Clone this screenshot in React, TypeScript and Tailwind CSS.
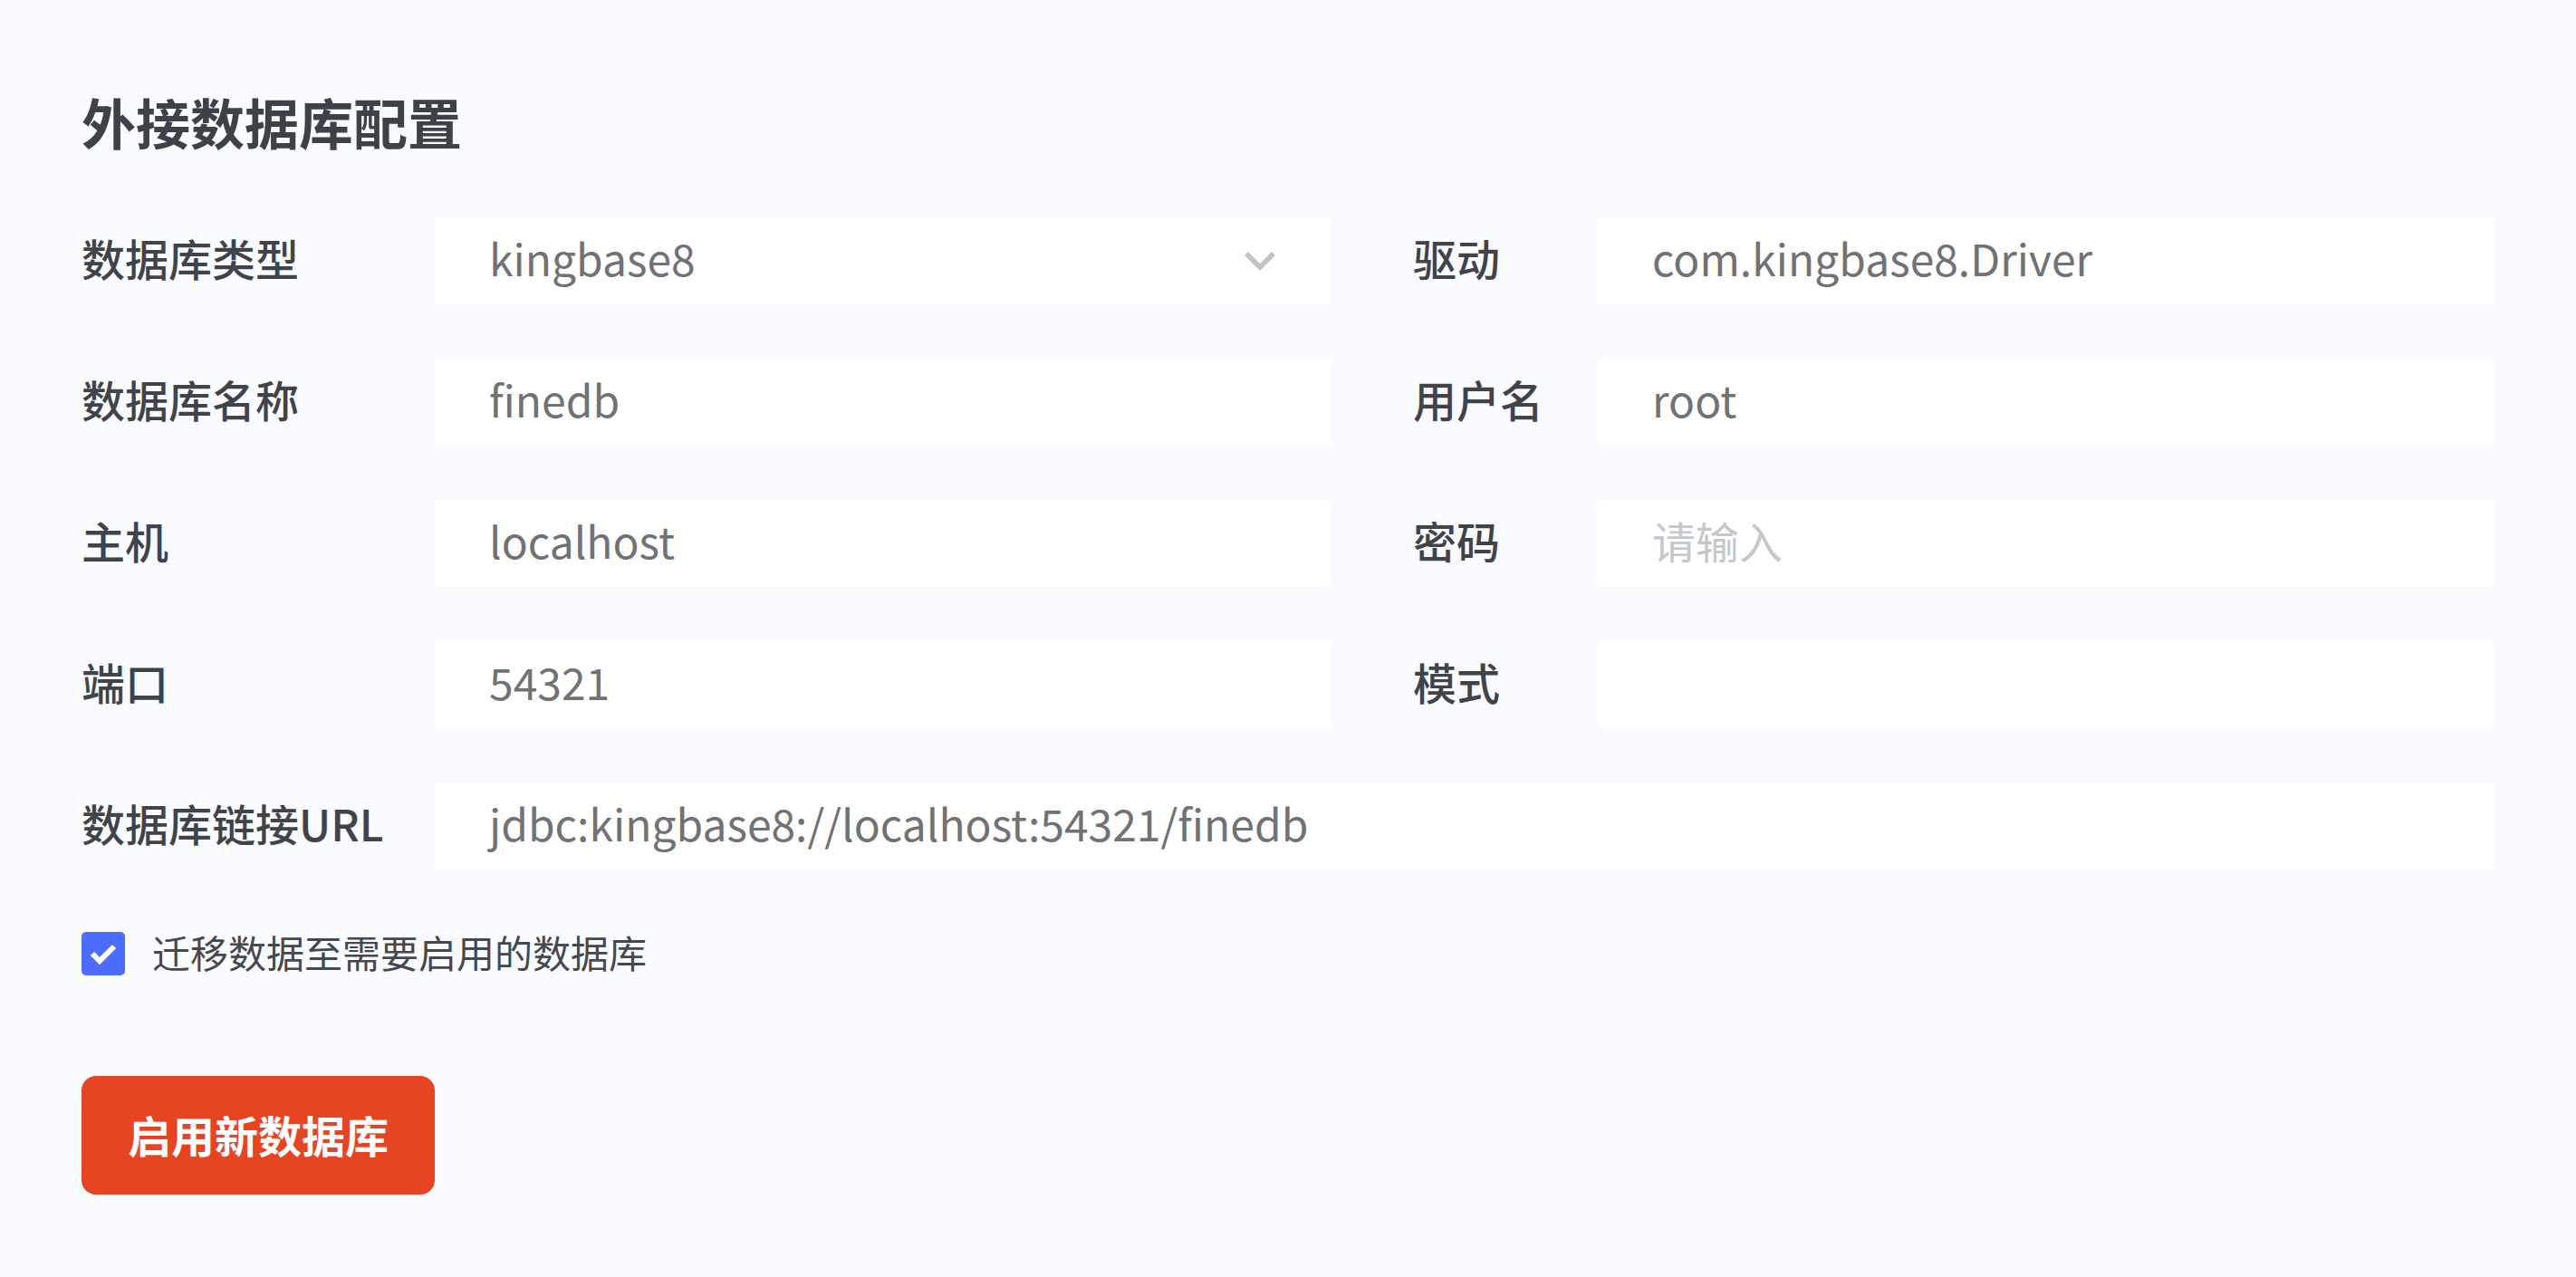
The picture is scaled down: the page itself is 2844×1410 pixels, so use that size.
import React from "react";

const font = { fontFamily: '"Noto Sans CJK SC", "Noto Sans", sans-serif' };

function Chevron() {
  return (
    <svg width="36" height="22" viewBox="0 0 36 22" fill="none">
      <path d="M3 3 L18 18 L33 3" stroke="#c2c3c7" strokeWidth="5.5" />
    </svg>
  );
}

function Field({ value, placeholder, select }: { value?: string; placeholder?: string; select?: boolean }) {
  return (
    <div className="flex h-[96px] flex-1 items-center bg-white pl-[60px] pr-[61px]">
      {value ? (
        <span className="flex-1 pb-[8px] text-[48px] leading-none text-[#707276]">{value}</span>
      ) : (
        <span className="flex-1 pb-[8px] text-[48px] leading-none text-[#c6c7ca]">{placeholder}</span>
      )}
      {select && <Chevron />}
    </div>
  );
}

function Label({ text, w }: { text: string; w: string }) {
  return (
    <div className={`${w} shrink-0 pb-[8px] text-[48px] font-medium leading-none text-[#404349]`}>{text}</div>
  );
}

export default function App() {
  const rows = [
    { l: "数据库类型", v: "kingbase8", select: true, rl: "驱动", rv: "com.kingbase8.Driver" },
    { l: "数据库名称", v: "finedb", rl: "用户名", rv: "root" },
    { l: "主机", v: "localhost", rl: "密码", rp: "请输入" },
    { l: "端口", v: "54321", rl: "模式" },
  ];

  return (
    <div className="min-h-[1410px] w-full bg-[#fafbfe] px-[90px] pt-[89px] pb-[91px]" style={font}>
      <h1 className="text-[60px] font-bold leading-[90px] text-[#3e4147]">外接数据库配置</h1>

      <div className="mt-[61px] flex flex-col gap-[60px]">
        {rows.map((r) => (
          <div key={r.l} className="flex items-center">
            <Label text={r.l} w="w-[390px]" />
            <Field value={r.v} select={r.select} />
            <div className="w-[90px] shrink-0" />
            <Label text={r.rl} w="w-[204px]" />
            <Field value={r.rv} placeholder={r.rp} />
          </div>
        ))}
        <div className="flex items-center">
          <Label text="数据库链接URL" w="w-[390px]" />
          <Field value="jdbc:kingbase8://localhost:54321/finedb" />
        </div>
      </div>

      <label className="mt-[69px] flex items-center gap-[30px]">
        <span className="flex h-[48px] w-[48px] items-center justify-center rounded-[5px] bg-[#4e6cff]">
          <svg width="30" height="24" viewBox="0 0 30 24" fill="none">
            <path d="M3 12 L11 20 L27 4" stroke="#ffffff" strokeWidth="6" />
          </svg>
        </span>
        <span className="pb-[4px] text-[42px] leading-none text-[#45484e]">迁移数据至需要启用的数据库</span>
      </label>

      <button className="mt-[111px] flex h-[131px] w-[390px] items-center justify-center rounded-[16px] bg-[#e64423] pb-[4px] text-[48px] font-bold text-white">
        启用新数据库
      </button>
    </div>
  );
}
